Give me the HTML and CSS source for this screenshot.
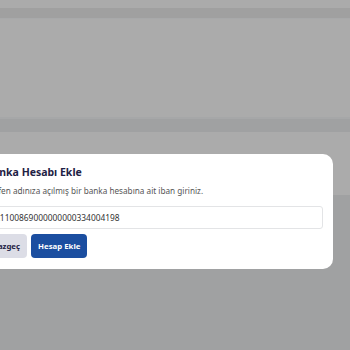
FILE: index.html
```html
<!DOCTYPE html>
<html lang="tr">
<head>
<meta charset="utf-8">
<link rel="stylesheet" href="styles.css">
</head>
<body>
<div class="page">
  <div class="gap-top"></div>
  <div class="topbar"></div>
  <div class="line"></div>
  <div class="panel"></div>
  <div class="line2"></div>
  <div class="subbar"></div>
  <div class="area"></div>
  <div class="footer"></div>
</div>
<div class="modal">
  <h2 class="title">Banka Hesabı Ekle</h2>
  <p class="desc">Lütfen adınıza açılmış bir banka hesabına ait iban giriniz.</p>
  <div class="input">TR1100869000000000334004198</div>
  <div class="actions">
    <button class="btn btn-cancel">Vazgeç</button>
    <button class="btn btn-primary">Hesap Ekle</button>
  </div>
</div>
</body>
</html>
```
FILE: styles.css
```css
html, body { margin: 0; padding: 0; }
body {
  width: 350px;
  height: 350px;
  overflow: hidden;
  background: #a0a1a2;
  font-family: "Noto Sans", "Open Sans", sans-serif;
  position: relative;
}
.page { display: flex; flex-direction: column; }
.gap-top { height: 8px; background: #ababab; }
.topbar { height: 10px; background: #a0a0a0; }
.line { height: 1px; background: #a8a9aa; }
.panel { height: 98px; background: #ababab; }
.line2 { height: 2px; background: #a6a7a8; }
.subbar { height: 13px; background: #a0a1a2; }
.area { height: 63px; background: #ababab; }
.footer { height: 155px; background: #a0a1a2; }

.modal {
  position: absolute;
  left: -60px;
  top: 154px;
  width: 393px;
  height: 115px;
  box-sizing: border-box;
  background: #fff;
  border-radius: 10px;
  padding: 11px 10px 0 46px;
}
.title {
  margin: 0;
  font-size: 10.5px;
  font-weight: 700;
  color: #1e2144;
  line-height: 14px;
}
.desc {
  margin: 5px 0 0;
  font-size: 8.2px;
  color: #555;
  line-height: 13px;
}
.input {
  margin-top: 9px;
  height: 23px;
  box-sizing: border-box;
  border: 1px solid #e3e4e6;
  border-radius: 3px;
  padding: 0 0 0 3px;
  font-size: 8.4px;
  color: #333;
  line-height: 21px;
}
.actions { display: flex; gap: 4px; margin-top: 5px; }
.btn {
  height: 24px;
  border: 0;
  border-radius: 4px;
  font-family: "Noto Sans", "Open Sans", sans-serif;
  font-weight: 700;
  font-size: 7.8px;
  padding: 0 7px;
}
.btn-cancel { background: #dcdde6; color: #1e2144; }
.btn-primary { background: #1b4ea0; color: #fff; }
```
